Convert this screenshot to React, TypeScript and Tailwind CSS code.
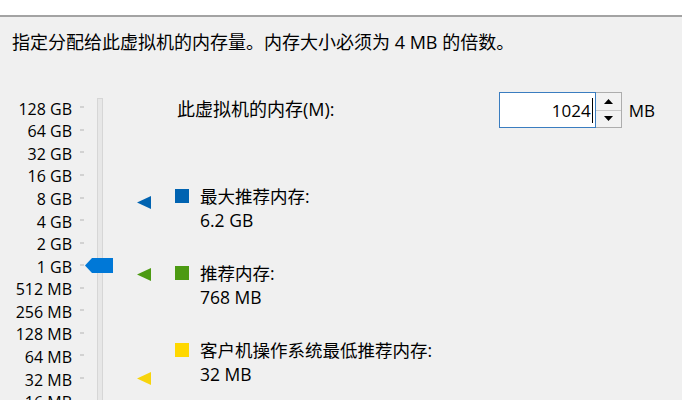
import React from "react";

const labels = [
  "128 GB",
  "64 GB",
  "32 GB",
  "16 GB",
  "8 GB",
  "4 GB",
  "2 GB",
  "1 GB",
  "512 MB",
  "256 MB",
  "128 MB",
  "64 MB",
  "32 MB",
  "16 MB",
];

function Tri({ color, top }: { color: string; top: string }) {
  return (
    <svg
      className={`absolute left-[137px] ${top}`}
      width="14"
      height="13"
      viewBox="0 0 14 13"
    >
      <polygon points="0,6.5 14,0 14,13" fill={color} />
    </svg>
  );
}

export default function App() {
  return (
    <div
      className="w-[682px] h-[400px] overflow-hidden bg-[#f0f0f0] text-black"
      style={{ fontFamily: '"Open Sans", "Noto Sans CJK SC", sans-serif' }}
    >
      <div className="h-[15px] bg-white" />
      <div className="h-[2px] bg-[#a3a3a3]" />
      <div className="mt-[13px] pl-[12px] text-[18px] leading-[24px] whitespace-nowrap">
        指定分配给此虚拟机的内存量。内存大小必须为 <span className="font-medium">4 MB</span> 的倍数。
      </div>

      <div className="relative mt-[38px] flex items-start">
        {/* scale labels */}
        <div className="mt-[5.5px] flex flex-col">
          {labels.map((l) => (
            <div key={l} className="flex h-[22.57px] items-center">
              <div className="w-[72px] text-right text-[16px] leading-none whitespace-nowrap">
                {l}
              </div>
              <div className="ml-[8px] h-px w-[4px] -translate-y-[1.5px] bg-[#b4b4b4]" />
            </div>
          ))}
        </div>

        {/* track */}
        <div className="ml-[13px] mt-[6px] h-[320px] w-[6px] border border-[#d6d6d6] bg-[#e7e7e7]" />

        {/* thumb */}
        <svg
          className="absolute left-[85px] top-[166px]"
          width="28"
          height="15"
          viewBox="0 0 28 15"
        >
          <polygon points="0,7.5 7,0 28,0 28,15 7,15" fill="#0078d7" />
        </svg>

        {/* markers */}
        <Tri color="#0063b1" top="top-[104px]" />
        <Tri color="#4c9a12" top="top-[176px]" />
        <Tri color="#f7d40c" top="top-[279.5px]" />

        {/* right column */}
        <div className="ml-[72px] flex flex-1 flex-col">
          <div className="flex h-[36px] items-center pr-[27px]">
            <div className="ml-[2px] -translate-y-[1px] text-[18px] leading-none whitespace-nowrap">
              此虚拟机的内存(M):
            </div>
            <div className="ml-auto flex items-center">
              <div className="flex h-[36px] w-[97px] items-center justify-end border border-[#3a7dc0] bg-white pr-[2px]">
                <span className="text-[17px] leading-none text-black">1024</span>
                <span className="ml-[1px] h-[25px] w-px bg-black" />
              </div>
              <div className="flex h-[36px] w-[26px] flex-col border border-l-0 border-[#adadad] bg-[#f2f2f2]">
                <div className="flex flex-1 items-center justify-center border-b border-[#c8c8c8]">
                  <svg width="9" height="5" viewBox="0 0 9 5">
                    <polygon points="4.5,0 9,5 0,5" fill="#000" />
                  </svg>
                </div>
                <div className="flex flex-1 items-center justify-center">
                  <svg width="9" height="5" viewBox="0 0 9 5">
                    <polygon points="0,0 9,0 4.5,5" fill="#000" />
                  </svg>
                </div>
              </div>
              <div className="ml-[7px] text-[17px] leading-none">MB</div>
            </div>
          </div>

          <div className="mt-[56px] flex items-start">
            <div className="mt-[5px] h-[14px] w-[14px] bg-[#0063b1]" />
            <div className="ml-[11px] text-[17.5px] leading-[24px]">
              <div>最大推荐内存:</div>
              <div className="font-medium">6.2 GB</div>
            </div>
          </div>

          <div className="mt-[29px] flex items-start">
            <div className="mt-[5px] h-[14px] w-[14px] bg-[#4c9a12]" />
            <div className="ml-[11px] text-[17.5px] leading-[24px]">
              <div>推荐内存:</div>
              <div className="font-medium">768 MB</div>
            </div>
          </div>

          <div className="mt-[29px] flex items-start">
            <div className="mt-[5px] h-[14px] w-[14px] bg-[#ffd800]" />
            <div className="ml-[11px] text-[17.5px] leading-[24px]">
              <div>客户机操作系统最低推荐内存:</div>
              <div className="font-medium">32 MB</div>
            </div>
          </div>
        </div>
      </div>
    </div>
  );
}
